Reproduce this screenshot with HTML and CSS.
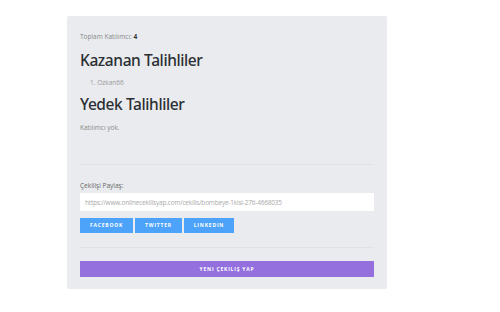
FILE: index.html
```html
<!DOCTYPE html>
<html>
<head>
<meta charset="utf-8">
<link rel="stylesheet" href="styles.css">
</head>
<body>
<div class="result_box">
	<div class="total">Toplam Katılımcı: <b>4</b></div>
	<h2 class="title title_first">Kazanan Talihliler</h2>
	<ol class="winners">
		<li>Ozkan66</li>
	</ol>
	<h2 class="title">Yedek Talihliler</h2>
	<div class="empty">Katılımcı yok.</div>
	<hr class="sep sep_top">
	<div class="share_label">Çekilişi Paylaş:</div>
	<input class="share_url" type="text" value="https://www.onlinecekilisyap.com/cekilis/bombeye-1kisi-27tl-4668035" readonly>
	<div class="share_buttons">
		<a class="share_btn btn_fb">Facebook</a>
		<a class="share_btn btn_tw">Twitter</a>
		<a class="share_btn btn_li">Linkedin</a>
	</div>
	<hr class="sep sep_bottom">
	<a class="new_btn">Yeni Çekiliş Yap</a>
</div>
</body>
</html>
```

FILE: styles.css
```css
* {margin: 0; padding: 0; box-sizing: border-box;}
body {background: #fff; font-family: "Open Sans", sans-serif; color: #777;}

.result_box {
	margin: 16px 0 0 67px;
	width: 320px;
	height: 273px;
	background: #e9ebef;
	border-radius: 2px;
	padding: 16px 13px 0 13px;
}

.total {font-size: 6.5px; color: #888; line-height: 10px;}
.total b {color: #333;}

.title {font-family: "Noto Sans", sans-serif; font-weight: 500; font-size: 15.5px; color: #2b2f33; line-height: 20px; letter-spacing: -0.4px;}
.title_first {margin-top: 8px;}

.winners {font-size: 6.5px; color: #999; margin: 8px 0 6px 10px; list-style-position: inside; line-height: 10px;}

.empty {font-size: 6.5px; color: #888; margin-top: 9px; line-height: 10px;}

.sep {border: 0; border-top: 1px solid #dfe1e5;}
.sep_top {margin-top: 31px;}
.share_label {font-size: 6.5px; color: #666; margin-top: 16px; line-height: 10px;}

.share_url {
	display: block; width: 100%; height: 18px; margin-top: 2px;
	border: 0; background: #fff; padding: 0 5px;
	font-family: "Open Sans", sans-serif; font-size: 6.5px; letter-spacing: -0.2px; color: #aaa; outline: none;
}

.share_buttons {display: flex; gap: 2px; margin-top: 7px;}
.share_btn {
	display: block; height: 15px; line-height: 15px; text-align: center;
	background: #4da3f9; color: #fff; font-size: 5px; font-weight: 700;
	text-transform: uppercase; letter-spacing: 0.8px;
}
.btn_fb {width: 53px;}
.btn_tw {width: 47px;}
.btn_li {width: 50px;}

.sep_bottom {margin-top: 14px;}

.new_btn {
	display: block; height: 16px; line-height: 16px; margin-top: 13px;
	background: #9370de; color: #fff; text-align: center;
	font-size: 5px; font-weight: 700; text-transform: uppercase; letter-spacing: 0.8px;
}
```
